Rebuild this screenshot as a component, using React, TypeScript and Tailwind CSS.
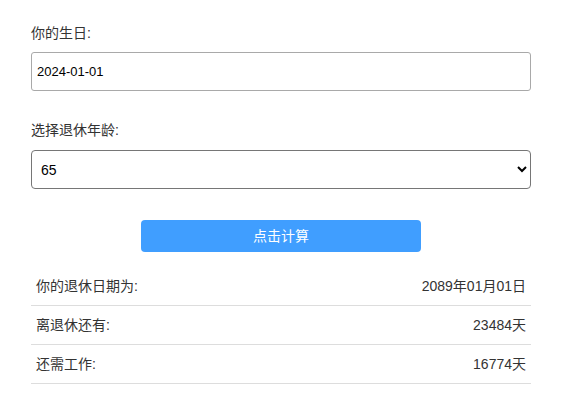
import { useState } from "react";

const RESULTS = [
  { label: "你的退休日期为:", value: "2089年01月01日" },
  { label: "离退休还有:", value: "23484天" },
  { label: "还需工作:", value: "16774天" },
];

export default function App() {
  const [birthday, setBirthday] = useState("2024-01-01");
  const [age, setAge] = useState("65");

  return (
    <div className="min-h-screen bg-white font-['Liberation_Sans','Noto_Sans_CJK_SC',sans-serif] text-[#333]">
      <div className="mx-auto w-[500px] pt-[23px]">
        {/* Birthday */}
        <label className="block text-[14px] leading-[20px] mb-[9px]">你的生日:</label>
        <input
          type="text"
          value={birthday}
          onChange={(e) => setBirthday(e.target.value)}
          className="block w-full h-[39px] px-[5px] border border-[#a9a9a9] rounded-[3px] text-[13px] text-black outline-none"
        />

        {/* Retirement age */}
        <label className="block text-[14px] leading-[20px] mt-[29px] mb-[10px]">选择退休年龄:</label>
        <select
          value={age}
          onChange={(e) => setAge(e.target.value)}
          className="block w-full h-[39px] pl-[5px] pr-[6px] border border-[#767676] rounded-[4px] bg-white text-[14px] text-black"
        >
          <option value="60">60</option>
          <option value="63">63</option>
          <option value="65">65</option>
        </select>

        <div className="flex justify-center mt-[31px]">
          <button className="w-[280px] h-[32px] rounded-[4px] bg-[#409eff] text-white text-[14px]">
            点击计算
          </button>
        </div>

        {/* Results */}
        <div className="mt-[15px]">
          {RESULTS.map((row) => (
            <div
              key={row.label}
              className="flex items-center justify-between h-[39px] px-[5px] border-b border-[#dddddd] text-[14px]"
            >
              <span>{row.label}</span>
              <span>{row.value}</span>
            </div>
          ))}
        </div>
      </div>
    </div>
  );
}
